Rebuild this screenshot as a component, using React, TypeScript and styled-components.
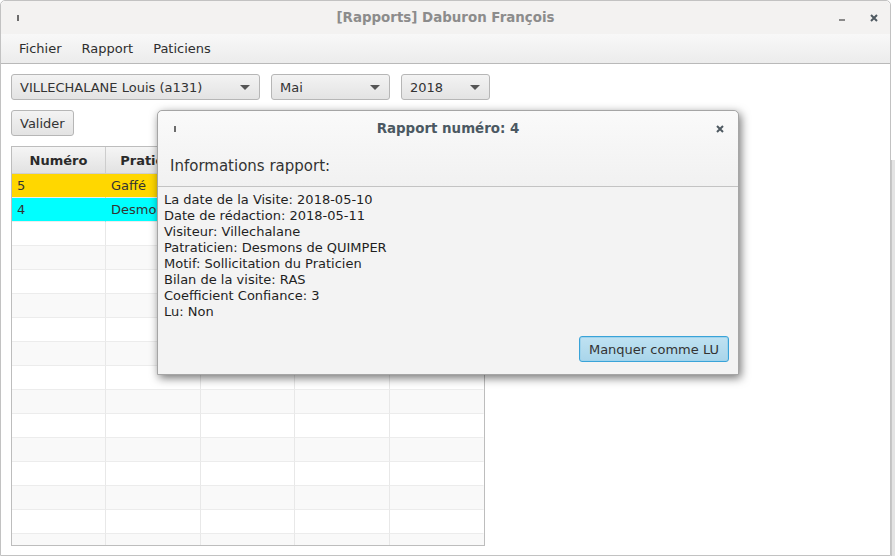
import * as React from 'react';
import styled, { createGlobalStyle } from 'styled-components';

const GlobalStyle = createGlobalStyle`
  html, body {
    margin: 0;
    padding: 0;
    background: #ffffff;
    font-family: "DejaVu Sans", "Liberation Sans", sans-serif;
    font-size: 13px;
    color: #333333;
  }
`;

const Screen = styled.div`
  display: flex;
  width: 895px;
  height: 556px;
  overflow: hidden;
`;

const Window = styled.div`
  position: relative;
  display: flex;
  flex-direction: column;
  width: 891px;
  height: 556px;
  box-sizing: border-box;
  border: 1px solid #c2c2c2;
  border-radius: 5px 5px 0 0;
  background: #ffffff;
`;

const BackStrip = styled.div`
  flex: 1;
  margin-top: 160px;
  background: #e3e3e3;
  border-left: 1px solid #c6c6c6;
`;

const TitleBar = styled.div<{ $small?: boolean }>`
  position: relative;
  display: flex;
  align-items: center;
  justify-content: center;
  height: ${(p) => (p.$small ? '35px' : '33px')};
  flex-shrink: 0;
  background: ${(p) => (p.$small ? 'transparent' : '#f3f2f1')};
  border-radius: 5px 5px 0 0;
`;

const TitleText = styled.span<{ $active?: boolean }>`
  font-weight: bold;
  font-size: 13.4px;
  color: ${(p) => (p.$active ? '#4b5862' : '#8c8c8c')};
`;

const WinIcon = styled.span<{ $left: number }>`
  position: absolute;
  left: ${(p) => p.$left}px;
  top: 50%;
  width: 2px;
  height: 6px;
  margin-top: -3px;
  background: #6c6c6c;
`;

const WinButtons = styled.div<{ $right: number }>`
  position: absolute;
  right: ${(p) => p.$right}px;
  top: 0;
  bottom: 0;
  display: flex;
  align-items: center;
  gap: 25px;
`;

const MinDash = styled.span`
  width: 6px;
  height: 2px;
  margin-top: 5px;
  background: #8a8a8a;
`;

const CloseIcon = () => (
  <svg width="8" height="8" viewBox="0 0 8 8">
    <path d="M1 1 L7 7 M7 1 L1 7" stroke="#4f5a62" strokeWidth="2" />
  </svg>
);

const MenuBar = styled.div`
  display: flex;
  align-items: center;
  height: 29px;
  flex-shrink: 0;
  padding-left: 8px;
  background: linear-gradient(#f8f8f8, #ececec);
  border-bottom: 1px solid #b9b9b9;
`;

const MenuItem = styled.span`
  padding: 0 10px;
  color: #2e2e2e;
`;

const Content = styled.div`
  flex: 1;
  display: flex;
  flex-direction: column;
  gap: 10px;
  padding: 10px 0 9px 10px;
  min-height: 0;
`;

const Toolbar = styled.div`
  display: flex;
  gap: 11px;
`;

const Combo = styled.div<{ $width: number }>`
  display: flex;
  align-items: center;
  justify-content: space-between;
  width: ${(p) => p.$width}px;
  height: 26px;
  box-sizing: border-box;
  padding: 0 9px 0 8px;
  border: 1px solid #b6b6b6;
  border-radius: 3px;
  background: linear-gradient(#f3f3f3, #e3e3e3);
  color: #333333;
`;

const Arrow = styled.span`
  width: 0;
  height: 0;
  border-left: 5px solid transparent;
  border-right: 5px solid transparent;
  border-top: 5px solid #555555;
`;

const Button = styled.button<{ $focused?: boolean }>`
  height: 26px;
  padding: 0 ${(p) => (p.$focused ? '9px' : '8px')};
  font-family: inherit;
  font-size: 13px;
  color: #333333;
  border-radius: 3px;
  border: 1px solid ${(p) => (p.$focused ? '#39a3d8' : '#b6b6b6')};
  background: ${(p) =>
    p.$focused
      ? 'linear-gradient(#bfe2f2, #a9d5ea)'
      : 'linear-gradient(#f3f3f3, #e3e3e3)'};
  box-shadow: ${(p) => (p.$focused ? 'inset 0 0 0 1px #9fd3ec' : 'none')};
`;

const ToolRow = styled.div`
  display: flex;
`;

const Table = styled.div`
  width: 474px;
  flex: 1;
  box-sizing: border-box;
  border: 1px solid #bdbdbd;
  overflow: hidden;
`;

const HeaderRow = styled.div`
  display: grid;
  grid-template-columns: 94px 95px 94px 95px 94px;
  height: 26px;
  background: linear-gradient(#f5f5f5, #e2e2e2);
  border-bottom: 1px solid #cfcfcf;
`;

const HeaderCell = styled.div`
  display: flex;
  align-items: center;
  justify-content: center;
  font-weight: bold;
  color: #2a2a2a;
  border-right: 1px solid #cdcdcd;
`;

const Row = styled.div<{ $bg: string }>`
  display: grid;
  grid-template-columns: 94px 95px 94px 95px 94px;
  height: 24px;
  background: ${(p) => p.$bg};
`;

const Cell = styled.div<{ $line: string }>`
  display: flex;
  align-items: center;
  padding-left: 5px;
  white-space: nowrap;
  overflow: hidden;
  color: #333333;
  border-right: 1px solid ${(p) => p.$line};
  border-bottom: 1px solid #ececec;
`;

const Dialog = styled.div`
  position: absolute;
  left: 156px;
  top: 109px;
  width: 580px;
  height: 263px;
  display: flex;
  flex-direction: column;
  border: 1px solid #a5a5a5;
  border-radius: 5px 5px 0 0;
  background: #f3f3f3;
  box-shadow: 2px 3px 10px rgba(0, 0, 0, 0.55);
`;

const DialogHead = styled.div`
  background: linear-gradient(#fafafa, #f1f1f1);
  border-radius: 5px 5px 0 0;
  border-bottom: 1px solid #c3c3c3;
`;

const SectionTitle = styled.div`
  display: flex;
  align-items: center;
  height: 40px;
  padding-left: 12px;
  font-size: 15px;
  color: #333333;
`;

const DialogBody = styled.div`
  flex: 1;
  display: flex;
  flex-direction: column;
  padding: 5px 9px 11px 6px;
`;

const InfoLine = styled.div`
  line-height: 16px;
  color: #1f1f1f;
`;

const Footer = styled.div`
  margin-top: auto;
  display: flex;
  justify-content: flex-end;
  padding-bottom: 1px;
`;

const rows: { num: string; name: string; bg: string }[] = [
  { num: '5', name: 'Gaffé', bg: '#ffd700' },
  { num: '4', name: 'Desmons de QUIMPER', bg: '#00ffff' },
];

const infos = [
  'La date de la Visite: 2018-05-10',
  'Date de rédaction: 2018-05-11',
  'Visiteur: Villechalane',
  'Patraticien: Desmons de QUIMPER',
  'Motif: Sollicitation du Praticien',
  'Bilan de la visite: RAS',
  'Coefficient Confiance: 3',
  'Lu: Non',
];

export default function App() {
  const filled = [...rows];
  for (let i = filled.length; i < 16; i++) {
    filled.push({ num: '', name: '', bg: i % 2 === 0 ? '#ffffff' : '#f9f9f9' });
  }

  return (
    <Screen>
      <GlobalStyle />
      <Window>
        <TitleBar>
          <WinIcon $left={16} />
          <TitleText>[Rapports] Daburon François</TitleText>
          <WinButtons $right={12}>
            <MinDash />
            <CloseIcon />
          </WinButtons>
        </TitleBar>
        <MenuBar>
          <MenuItem>Fichier</MenuItem>
          <MenuItem>Rapport</MenuItem>
          <MenuItem>Paticiens</MenuItem>
        </MenuBar>
        <Content>
          <Toolbar>
            <Combo $width={249}>
              VILLECHALANE Louis (a131)
              <Arrow />
            </Combo>
            <Combo $width={119}>
              Mai
              <Arrow />
            </Combo>
            <Combo $width={89}>
              2018
              <Arrow />
            </Combo>
          </Toolbar>
          <ToolRow>
            <Button>Valider</Button>
          </ToolRow>
          <Table>
            <HeaderRow>
              <HeaderCell>Numéro</HeaderCell>
              <HeaderCell>Praticien</HeaderCell>
              <HeaderCell>Date</HeaderCell>
              <HeaderCell>Motif</HeaderCell>
              <HeaderCell>Lu</HeaderCell>
            </HeaderRow>
            {filled.map((r, i) => (
              <Row key={i} $bg={r.bg}>
                <Cell $line={r.num ? 'transparent' : '#e8e8e8'}>{r.num}</Cell>
                <Cell $line={r.num ? 'transparent' : '#e8e8e8'}>{r.name}</Cell>
                <Cell $line="#e8e8e8" />
                <Cell $line="#e8e8e8" />
                <Cell $line="transparent" />
              </Row>
            ))}
          </Table>
        </Content>

        <Dialog>
          <DialogHead>
            <TitleBar $small>
              <WinIcon $left={16} />
              <TitleText $active>Rapport numéro: 4</TitleText>
              <WinButtons $right={14}>
                <CloseIcon />
              </WinButtons>
            </TitleBar>
            <SectionTitle>Informations rapport:</SectionTitle>
          </DialogHead>
          <DialogBody>
            {infos.map((t) => (
              <InfoLine key={t}>{t}</InfoLine>
            ))}
            <Footer>
              <Button $focused>Manquer comme LU</Button>
            </Footer>
          </DialogBody>
        </Dialog>
      </Window>
      <BackStrip />
    </Screen>
  );
}
